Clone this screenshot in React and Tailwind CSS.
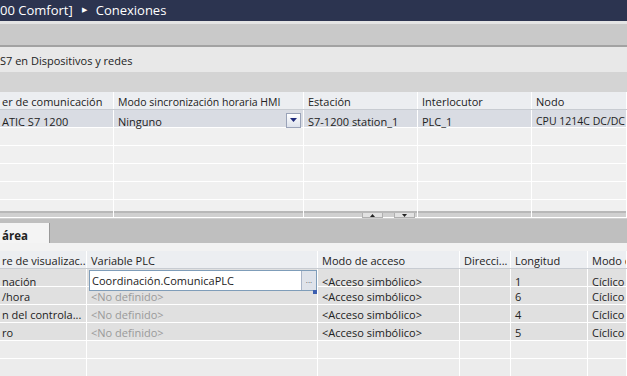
import React from 'react';

const topCols = 'grid grid-cols-[114px_190px_114px_114px_1fr]';
const botCols = 'grid grid-cols-[87px_231px_142px_51px_77px_1fr]';

const topRows = [
  ['ATIC S7 1200', 'Ninguno', 'S7-1200 station_1', 'PLC_1', 'CPU 1214C DC/DC'],
];

const areaRows = [
  ['nación', 'Coordinación.ComunicaPLC', '<Acceso simbólico>', '', '1', 'Cíclico'],
  ['/hora', '<No definido>', '<Acceso simbólico>', '', '6', 'Cíclico'],
  ['n del controla...', '<No definido>', '<Acceso simbólico>', '', '4', 'Cíclico'],
  ['ro', '<No definido>', '<Acceso simbólico>', '', '5', 'Cíclico'],
];

function Cell({ children, className = '' }) {
  return (
    <div className={`h-full border-r border-white px-1 pt-[4px] flex items-center whitespace-nowrap overflow-hidden ${className}`}>
      {children}
    </div>
  );
}

export default function App() {
  return (
    <div className="w-[627px] h-[376px] overflow-hidden bg-[#d4d4d4] text-[11px] text-[#222] font-['Open_Sans',sans-serif]">
      {/* title bar */}
      <div className="h-[21px] bg-[#2c3450] text-white text-[13px] flex items-center whitespace-nowrap">
        <span>00 Comfort]</span>
        <span className="ml-[9px] mr-[9px] text-[7px]">▶</span>
        <span>Conexiones</span>
      </div>
      <div className="h-[3px] bg-[#e4e4e4]" />
      <div className="h-[23px] bg-[#c9c9c9] border-b-2 border-[#a2a2a2]" />
      <div className="h-[25px] bg-[#e8e8e8] flex items-center pt-[4px] text-[11px] whitespace-nowrap">
        <span>S7 en Dispositivos y redes</span>
      </div>
      <div className="h-[20px] bg-[#d4d4d4]" />

      {/* connections table */}
      <div className="h-[121px] bg-[#f0f0f0] flex flex-col border-b-2 border-[#b8b8b8]">
        <div className={`${topCols} h-[18px] bg-[#eceef1] border-b border-[#c8ccd2] shrink-0`}>
          <Cell className="border-[#d0d0d0] pl-[2px]">er de comunicación</Cell>
          <Cell className="border-[#d0d0d0] text-[10.5px]">Modo sincronización horaria HMI</Cell>
          <Cell className="border-[#d0d0d0]">Estación</Cell>
          <Cell className="border-[#d0d0d0]">Interlocutor</Cell>
          <Cell className="border-[#d0d0d0]">Nodo</Cell>
        </div>
        {topRows.map((r, i) => (
          <div key={i} className={`${topCols} h-[18px] bg-[#d9dce3] border-b border-white shrink-0`}>
            <Cell className="pl-[2px]">{r[0]}</Cell>
            <div className="h-full border-r border-white pl-1 pr-[2px] flex items-center justify-between whitespace-nowrap">
              <span className="pt-[4px]">{r[1]}</span>
              <span className="w-[15px] h-[15px] border border-[#9aa3b8] bg-gradient-to-b from-white to-[#dde2ec] flex items-center justify-center">
                <svg width="7" height="4" viewBox="0 0 7 4"><path d="M0 0h7L3.5 4z" fill="#1e2a7a" /></svg>
              </span>
            </div>
            <Cell>{r[2]}</Cell>
            <Cell>{r[3]}</Cell>
            <Cell className="text-[10.5px]">{r[4]}</Cell>
          </div>
        ))}
        {[0, 1, 2, 3, 4].map(i => (
          <div key={i} className={`${topCols} h-[18px] border-b border-white shrink-0`}>
            <Cell /><Cell /><Cell /><Cell /><Cell />
          </div>
        ))}
      </div>

      {/* splitter */}
      <div className="h-[6px] bg-[#d0d0d0] flex items-start pl-[362px] gap-[11px]">
        <span className="w-[21px] h-[5px] bg-[#e2e2e2] border border-[#b0b0b0] border-t-0 flex items-center justify-center">
          <svg width="5" height="3" viewBox="0 0 5 3"><path d="M0 3h5L2.5 0z" fill="#222" /></svg>
        </span>
        <span className="w-[21px] h-[5px] bg-[#e2e2e2] border border-[#b0b0b0] border-t-0 flex items-center justify-center">
          <svg width="5" height="3" viewBox="0 0 5 3"><path d="M0 0h5L2.5 3z" fill="#222" /></svg>
        </span>
      </div>

      {/* tabs */}
      <div className="h-[24px] bg-[#bfbfbf] flex items-end">
        <div className="h-[20px] w-[50px] bg-[#f4f4f4] border-r border-[#999] flex items-center pt-[5px] pl-[2px] font-bold text-[11.5px]">
          área
        </div>
      </div>
      <div className="h-[8px] bg-[#f2f2f2]" />

      {/* area pointer table */}
      <div className="bg-[#ececec]">
        <div className={`${botCols} h-[18px] bg-[#eceef1] border-b border-[#c8ccd2]`}>
          <Cell className="border-[#d0d0d0] pl-[2px]">re de visualizac..</Cell>
          <Cell className="border-[#d0d0d0]">Variable PLC</Cell>
          <Cell className="border-[#d0d0d0]">Modo de acceso</Cell>
          <Cell className="border-[#d0d0d0]">Direcci...</Cell>
          <Cell className="border-[#d0d0d0]">Longitud</Cell>
          <Cell className="border-[#d0d0d0]">Modo d</Cell>
        </div>
        {areaRows.map((r, i) => (
          <div key={i} className={`${botCols} h-[18px] bg-[#e0e0e0] border-b border-white`}>
            <Cell className="pl-[2px]">{r[0]}</Cell>
            {i === 0 ? (
              <div className="h-full border-r border-white pl-[2px] py-[1px] relative">
                <div className="h-full bg-white border border-[#7f9db9] flex items-center justify-between pl-[2px]">
                  <span className="pt-[2px]">{r[1]}</span>
                  <span className="w-[15px] h-full border-l border-[#a8b4c8] bg-[#dfe3ea] text-[8px] text-[#666] flex items-center justify-center">...</span>
                </div>
                <span className="absolute right-0 bottom-[-2px] w-[4px] h-[4px] bg-[#3c5fb0]" />
              </div>
            ) : (
              <Cell className="text-[#9a9a9a]">{r[1]}</Cell>
            )}
            <Cell>{r[2]}</Cell>
            <Cell>{r[3]}</Cell>
            <Cell>{r[4]}</Cell>
            <Cell>{r[5]}</Cell>
          </div>
        ))}
        {[0, 1].map(i => (
          <div key={i} className={`${botCols} h-[18px] border-b border-white`}>
            <Cell /><Cell /><Cell /><Cell /><Cell /><Cell />
          </div>
        ))}
      </div>
    </div>
  );
}
